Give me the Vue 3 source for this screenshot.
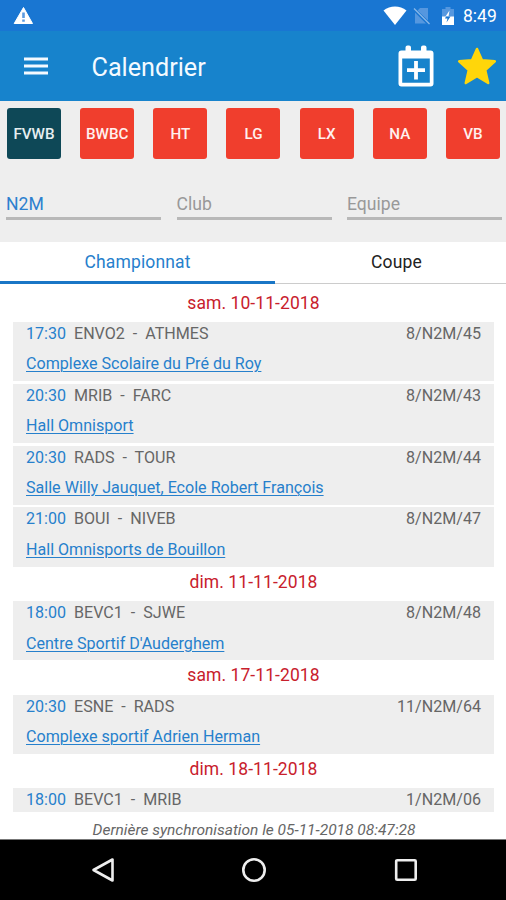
<script setup>
import { ref } from 'vue'

const provinces = ['FVWB', 'BWBC', 'HT', 'LG', 'LX', 'NA', 'VB']
const province = ref('FVWB')
const filters = [
  { label: 'Division', value: 'N2M' },
  { label: 'Club', value: '' },
  { label: 'Equipe', value: '' },
]
const days = [
  {
    date: 'sam. 10-11-2018',
    games: [
      { time: '17:30', home: 'ENVO2', away: 'ATHMES', id: '8/N2M/45', hall: 'Complexe Scolaire du Pré du Roy' },
      { time: '20:30', home: 'MRIB', away: 'FARC', id: '8/N2M/43', hall: 'Hall Omnisport' },
      { time: '20:30', home: 'RADS', away: 'TOUR', id: '8/N2M/44', hall: 'Salle Willy Jauquet, Ecole Robert François' },
      { time: '21:00', home: 'BOUI', away: 'NIVEB', id: '8/N2M/47', hall: 'Hall Omnisports de Bouillon' },
    ],
  },
  {
    date: 'dim. 11-11-2018',
    games: [{ time: '18:00', home: 'BEVC1', away: 'SJWE', id: '8/N2M/48', hall: "Centre Sportif D'Auderghem" }],
  },
  {
    date: 'sam. 17-11-2018',
    games: [{ time: '20:30', home: 'ESNE', away: 'RADS', id: '11/N2M/64', hall: 'Complexe sportif Adrien Herman' }],
  },
  {
    date: 'dim. 18-11-2018',
    games: [{ time: '18:00', home: 'BEVC1', away: 'MRIB', id: '1/N2M/06', hall: '' }],
  },
]
</script>

<template>
  <div class="screen">
    <div class="status">
      <svg class="warn" width="22" height="20" viewBox="0 0 22 20">
        <path d="M10.500 1.500 19.500 17.500H1.200Z" fill="#fff" stroke="#fff" stroke-linejoin="round" />
        <path d="M10.500 6.500v5.500M10.500 13.500v2.300" stroke="#5c9be0" stroke-width="2.600" />
      </svg>
      <svg class="wifi" width="24" height="20" viewBox="0 0 24 20">
        <path d="M.5 4.600C7-.8 17-.8 23.500 4.600L12 19Z" fill="#fff" />
      </svg>
      <svg class="nosim" width="18" height="18" viewBox="0 0 18 18">
        <path d="M7 1h8v12.500L4.500 3.500ZM2 5.500 13 16.500H2Z" fill="#5597df" />
        <path d="M1 1.500 16.500 17" stroke="#8bb9e9" stroke-width="1.300" />
      </svg>
      <svg class="battery" width="14" height="20" viewBox="0 0 14 20">
        <path d="M1 3h3.500V1h5v2H13v8H1Z" fill="#5597df" />
        <path d="M1 10.500h12V19H1Z" fill="#fff" />
        <path d="M8.500 4.500 7.500 10.500H4.500Z" fill="#fff" />
        <path d="M9.500 10.500 5.500 16.500 6.500 12.500H4L5 10.500Z" fill="#1976d2" />
      </svg>
      <span class="clock">8:49</span>
    </div>

    <header class="bar">
      <svg class="menu" width="24" height="18" viewBox="0 0 24 18">
        <path d="M0 2h24M0 9h24M0 16h24" stroke="#f4faff" stroke-width="2.900" />
      </svg>
      <h1>Calendrier</h1>
      <svg class="calendar" width="36" height="42" viewBox="0 0 36 42">
        <path fill="#fff" fill-rule="evenodd" d="M3.500 5.500H7.500V2.500Q7.500.500 9.500.500H11Q13 .500 13 2.500V5.500H23V2.500Q23 .500 25 .500H26.500Q28.500.500 28.500 2.500V5.500H32.500Q35.500 5.500 35.500 8.500V38.500Q35.500 41.500 32.500 41.500H3.500Q.500 41.500.500 38.500V8.500Q.500 5.500 3.500 5.500ZM4.200 13.500V37.700H31.800V13.500Z" />
        <path d="M18 16v18.500M9 25.200h18" stroke="#fff" stroke-width="3.800" />
      </svg>
      <svg class="star" width="40" height="38" viewBox="0 0 40 38">
        <path d="M20 2 25 13.200 37.800 14.300 28.200 23 31.200 36 20 29.200 8.800 36 11.800 23 2.200 14.300 15 13.200Z" fill="#ffd60a" stroke="#ffd60a" stroke-width="2.500" stroke-linejoin="round" />
      </svg>
    </header>

    <section class="filters">
      <div class="chips">
        <button v-for="p in provinces" :key="p" :class="{ on: p === province }" @click="province = p">{{ p }}</button>
      </div>
      <div class="fields">
        <div v-for="f in filters" :key="f.label" class="field" :class="{ filled: f.value }">{{ f.value || f.label }}</div>
      </div>
    </section>

    <nav class="tabs">
      <div class="tab active"><span>Championnat</span></div>
      <div class="tab"><span>Coupe</span></div>
    </nav>

    <main class="list">
      <section v-for="d in days" :key="d.date">
        <h2>{{ d.date }}</h2>
        <div class="games">
          <article v-for="g in d.games" :key="g.id">
            <div class="row">
              <span class="time">{{ g.time }}</span>
              <span class="teams">{{ g.home }} - {{ g.away }}</span>
              <span class="id">{{ g.id }}</span>
            </div>
            <a v-if="g.hall">{{ g.hall }}</a>
          </article>
        </div>
      </section>
    </main>

    <p class="sync">Dernière synchronisation le 05-11-2018 08:47:28</p>

    <footer class="nav">
      <svg width="24" height="26" viewBox="0 0 24 26"><path d="M21.500 2.500v21L2.500 13Z" /></svg>
      <svg class="home" width="26" height="26" viewBox="0 0 26 26"><circle cx="13" cy="13" r="10.700" /></svg>
      <svg width="24" height="26" viewBox="0 0 24 26"><rect x="2.200" y="3.200" width="19.500" height="19.500" rx="1" /></svg>
    </footer>
  </div>
</template>

<style>
body {
  margin: 0;
}
</style>

<style scoped>
.screen {
  width: 506px;
  height: 900px;
  display: flex;
  flex-direction: column;
  overflow: hidden;
  background: #fff;
  font-family: Roboto, "Liberation Sans", sans-serif;
  box-sizing: border-box;
}
.status {
  height: 31px;
  flex: none;
  display: flex;
  align-items: center;
  padding: 0 9px 0 13px;
  background: #1976d2;
  color: #fff;
}
.warn {
  margin-right: auto;
}
.nosim {
  margin-left: 6px;
}
.battery {
  margin-left: 10px;
}
.clock {
  margin: 1px 0 0 8px;
  width: 34px;
  font-size: 17.500px;
  font-weight: 400;
  line-height: 20px;
}
.bar {
  height: 70px;
  flex: none;
  display: flex;
  align-items: center;
  padding: 0 9px 0 24px;
  background: #1783cc;
  box-sizing: border-box;
}
.bar h1 {
  margin: 3px auto 0 43.500px;
  font-size: 25.200px;
  line-height: 32px;
  font-weight: 400;
  color: #f4faff;
}
.star {
  margin-left: 23px;
}
.filters {
  height: 141px;
  flex: none;
  background: #eee;
  padding: 7px 6px 0 7px;
  box-sizing: border-box;
}
.chips {
  display: flex;
  justify-content: space-between;
}
.chips button {
  width: 54px;
  height: 51px;
  padding: 0;
  border: 0;
  border-radius: 3px;
  background: #f03e2d;
  color: #fff0ee;
  font: 500 15.200px/52px Roboto, sans-serif;
}
.chips button.on {
  background: #0e4857;
  color: #e6eff1;
}
.fields {
  display: grid;
  grid-template-columns: repeat(3, 155px);
  justify-content: space-between;
  margin: 34px -2px 0 -1px;
}
.field {
  height: 24px;
  border-bottom: 3px solid #b8b8b8;
  font-size: 17.600px;
  line-height: 23px;
  color: #999;
}
.field.filled {
  color: #2c80cf;
}
.tabs {
  height: 42px;
  flex: none;
  display: flex;
}
.tab {
  flex: none;
  width: 231px;
  box-sizing: border-box;
  border-bottom: 1px solid #ccc;
  font-size: 17.500px;
  line-height: 40px;
  letter-spacing: 0.150px;
  text-align: center;
  color: #222;
}
.tab:not(.active) span {
  margin-left: 12px;
}
.tab.active {
  width: 275px;
  border-bottom: 3px solid #1976c6;
  color: #2680cc;
}
.list {
  height: 528px;
  flex: none;
  overflow: hidden;
  padding: 3.500px 12px 0 13px;
  box-sizing: border-box;
}
.list h2 {
  margin: 0;
  height: 34.300px;
  font-size: 17.500px;
  line-height: 31px;
  font-weight: 400;
  letter-spacing: 0.080px;
  text-align: center;
  color: #c8202c;
}
.games {
  display: grid;
  gap: 2.600px;
}
article {
  height: 59.300px;
  background: #eee;
  padding: 0 13px;
  box-sizing: border-box;
  font-size: 16.080px;
}
.row {
  display: flex;
  line-height: 24.500px;
  color: #666;
}
.time {
  width: 48px;
  color: #2680cc;
}
.teams {
  word-spacing: 4px;
}
.id {
  margin-left: auto;
}
article a {
  display: block;
  line-height: 35px;
  color: #2680cc;
  text-decoration: underline;
  text-decoration-thickness: 1px;
  text-underline-offset: 2px;
}
.sync {
  height: 28px;
  flex: none;
  margin: 0;
  border-bottom: 1px solid #777;
  box-sizing: border-box;
  padding: 4px 0 0 2px;
  font-size: 15.500px;
  line-height: 28px;
  font-style: italic;
  text-align: center;
  color: #666;
}
.nav {
  flex: 1;
  background: #000;
  display: flex;
  justify-content: space-between;
  align-items: center;
  padding: 0 88px 0 91px;
}
.nav svg {
  fill: none;
  stroke: #eee;
  stroke-width: 2.600;
  stroke-linejoin: round;
}
.nav .home {
  margin-right: 2px;
}
</style>
